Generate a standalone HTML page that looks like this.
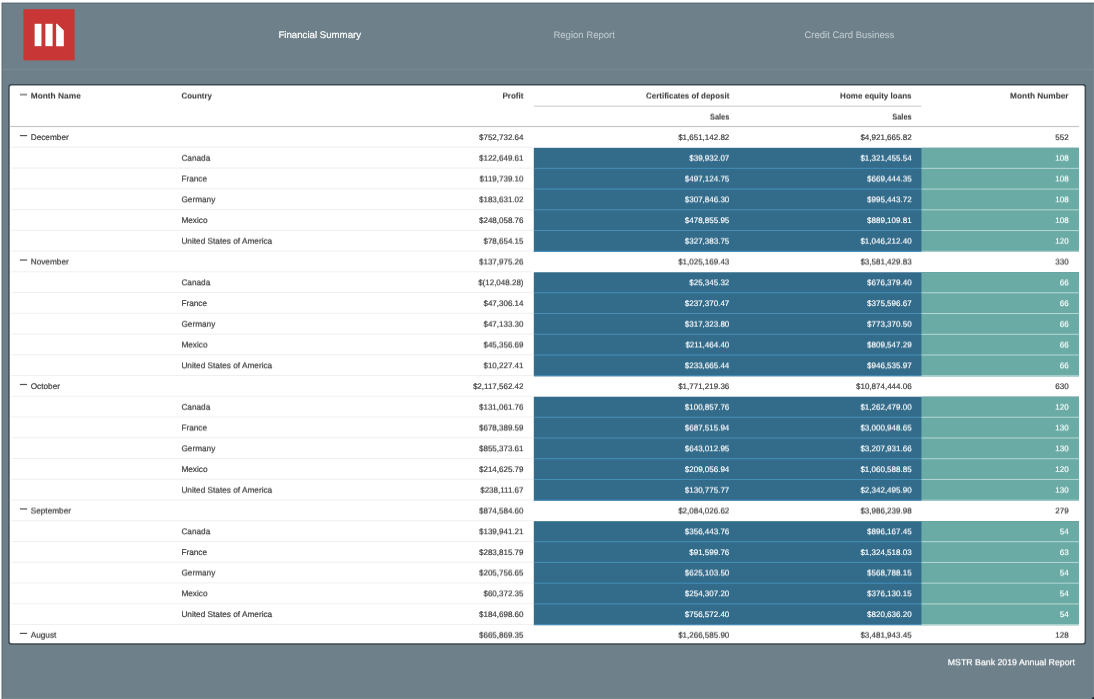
<!DOCTYPE html>
<html lang="en"><head><meta charset="utf-8"><title>MSTR Bank 2019 Annual Report</title>
<style>
html,body{margin:0;padding:0;background:#fff}
body{width:1094px;height:699px;overflow:hidden;position:relative}
svg{position:absolute;left:0;top:0;display:block;will-change:transform}
text{font-family:"Liberation Sans","DejaVu Sans",sans-serif;white-space:pre}
.n{font-size:8.25px;fill:#414141;stroke:#414141;stroke-width:0.2px}
.v{font-size:8.0px;fill:#414141;stroke:#414141;stroke-width:0.2px;text-anchor:end}
.w{fill:#fff;stroke:#fff;stroke-width:0.15px}
.h{font-size:8.15px;font-weight:bold;fill:#383838;stroke:#383838;stroke-width:0.05px}
.e{text-anchor:end}
.tab{font-size:9.55px;fill:#fff;stroke:#fff;stroke-width:0.2px}
.off{fill:#bdc7cc;stroke:#bdc7cc;stroke-width:0.1px}
.foot{font-size:8.76px;fill:#fff;stroke:#fff;stroke-width:0.2px;text-anchor:end}
</style></head>
<body>
<svg width="1094" height="699" viewBox="0 0 1094 699" text-rendering="geometricPrecision">
<defs><filter id="s1" x="-2%" y="-40%" width="104%" height="180%"><feConvolveMatrix order="1 2" kernelMatrix="0.75 0.25" divisor="1" targetX="0" targetY="1" edgeMode="none" preserveAlpha="false"/></filter><filter id="s2" x="-2%" y="-40%" width="104%" height="180%"><feConvolveMatrix order="1 2" kernelMatrix="0.5 0.5" divisor="1" targetX="0" targetY="1" edgeMode="none" preserveAlpha="false"/></filter><filter id="s3" x="-2%" y="-40%" width="104%" height="180%"><feConvolveMatrix order="1 2" kernelMatrix="0.25 0.75" divisor="1" targetX="0" targetY="1" edgeMode="none" preserveAlpha="false"/></filter></defs>
<rect x="0" y="0" width="1094" height="699" fill="#fff"/>
<rect x="1.5" y="2.55" width="1093" height="698" fill="#5d6f79"/>
<rect x="2.7" y="3.85" width="1093" height="698" fill="#6e808a"/>
<rect x="1093" y="3.85" width="1" height="696" fill="#76888f"/>
<rect x="2.7" y="698.2" width="1092" height="0.8" fill="#75878f"/>
<path d="M1094 696.7 Q1092.2 697.2 1091.7 699 L1094 699 Z" fill="#1e2022"/>
<rect x="2.6" y="68.8" width="1092" height="1" fill="#7b8d97"/>
<rect x="23.4" y="9.2" width="51.2" height="51.2" fill="#c93636"/>
<g fill="#fff"><rect x="34.65" y="23.8" width="6.8" height="22.35"/><rect x="45.4" y="23.8" width="7.2" height="22.35"/><path d="M56.15 23.8 L57 23.8 L63.8 30.5 L63.8 46.15 L56.15 46.15 Z"/></g>
<text class="tab" x="278.4" y="38" textLength="82.7" lengthAdjust="spacingAndGlyphs">Financial Summary</text>
<text class="tab off" x="553.4" y="38" textLength="61.5" lengthAdjust="spacingAndGlyphs">Region Report</text>
<text class="tab off" x="804.5" y="38" textLength="89.7" lengthAdjust="spacingAndGlyphs">Credit Card Business</text>
<rect x="8.2" y="84.05" width="1077.9" height="560.8" rx="3" ry="3" fill="#3f4a52"/>
<rect x="9.7" y="85.55" width="1074.9" height="557.8" rx="1.8" ry="1.8" fill="#fff"/>
<g filter="url(#s2)"><rect x="19.9" y="93.5" width="7.2" height="1.2" fill="#555"/><text class="h" x="30.7" y="98" textLength="50.1" lengthAdjust="spacingAndGlyphs">Month Name</text><text class="h" x="181.5" y="98" textLength="30.5" lengthAdjust="spacingAndGlyphs">Country</text><text class="h e" x="523.5" y="98" textLength="21.1" lengthAdjust="spacingAndGlyphs">Profit</text><text class="h e" x="729.3" y="98" textLength="83.2" lengthAdjust="spacingAndGlyphs">Certificates of deposit</text><text class="h e" x="911.6" y="98" textLength="71.5" lengthAdjust="spacingAndGlyphs">Home equity loans</text><text class="h e" x="1068.6" y="98" textLength="58.5" lengthAdjust="spacingAndGlyphs">Month Number</text></g><g filter="url(#s2)"><text class="h e" x="729.3" y="119" textLength="19.2" lengthAdjust="spacingAndGlyphs">Sales</text><text class="h e" x="911.6" y="119" textLength="19.3" lengthAdjust="spacingAndGlyphs">Sales</text></g>
<rect x="533.8" y="105.6" width="387.65" height="1.1" fill="#d0d0d0"/><rect x="9.7" y="125.9" width="1069.3" height="1.2" fill="#c6c6c6"/>
<rect x="533.8" y="147.81" width="545.2" height="103.99" fill="#336b8a"/><rect x="921.45" y="147.81" width="157.55" height="103.99" fill="#6aaba5"/>
<rect x="533.8" y="272.26" width="545.2" height="103.99" fill="#336b8a"/><rect x="921.45" y="272.26" width="157.55" height="103.99" fill="#6aaba5"/>
<rect x="533.8" y="396.71" width="545.2" height="103.99" fill="#336b8a"/><rect x="921.45" y="396.71" width="157.55" height="103.99" fill="#6aaba5"/>
<rect x="533.8" y="521.17" width="545.2" height="103.99" fill="#336b8a"/><rect x="921.45" y="521.17" width="157.55" height="103.99" fill="#6aaba5"/>
<rect x="11" y="146.81" width="521.5" height="1.1" fill="#f0f0f0"/>
<rect x="11" y="167.55" width="521.5" height="1.1" fill="#f0f0f0"/><rect x="533.8" y="167.83" width="387.9" height="1" fill="#4590b9"/><rect x="921.45" y="167.83" width="157.55" height="1" fill="#b6d8d4"/>
<rect x="11" y="188.29" width="521.5" height="1.1" fill="#f0f0f0"/><rect x="533.8" y="188.57" width="387.9" height="1" fill="#4590b9"/><rect x="921.45" y="188.57" width="157.55" height="1" fill="#b6d8d4"/>
<rect x="11" y="209.04" width="521.5" height="1.1" fill="#f0f0f0"/><rect x="533.8" y="209.32" width="387.9" height="1" fill="#4590b9"/><rect x="921.45" y="209.32" width="157.55" height="1" fill="#b6d8d4"/>
<rect x="11" y="229.78" width="521.5" height="1.1" fill="#f0f0f0"/><rect x="533.8" y="230.06" width="387.9" height="1" fill="#4590b9"/><rect x="921.45" y="230.06" width="157.55" height="1" fill="#b6d8d4"/>
<rect x="11" y="250.52" width="521.5" height="1.1" fill="#f0f0f0"/><rect x="533.8" y="250.8" width="387.9" height="1" fill="#4590b9"/><rect x="921.45" y="250.8" width="157.55" height="1" fill="#b6d8d4"/>
<rect x="11" y="271.26" width="521.5" height="1.1" fill="#f0f0f0"/>
<rect x="11" y="292" width="521.5" height="1.1" fill="#f0f0f0"/><rect x="533.8" y="292.28" width="387.9" height="1" fill="#4590b9"/><rect x="921.45" y="292.28" width="157.55" height="1" fill="#b6d8d4"/>
<rect x="11" y="312.75" width="521.5" height="1.1" fill="#f0f0f0"/><rect x="533.8" y="313.03" width="387.9" height="1" fill="#4590b9"/><rect x="921.45" y="313.03" width="157.55" height="1" fill="#b6d8d4"/>
<rect x="11" y="333.49" width="521.5" height="1.1" fill="#f0f0f0"/><rect x="533.8" y="333.77" width="387.9" height="1" fill="#4590b9"/><rect x="921.45" y="333.77" width="157.55" height="1" fill="#b6d8d4"/>
<rect x="11" y="354.23" width="521.5" height="1.1" fill="#f0f0f0"/><rect x="533.8" y="354.51" width="387.9" height="1" fill="#4590b9"/><rect x="921.45" y="354.51" width="157.55" height="1" fill="#b6d8d4"/>
<rect x="11" y="374.97" width="521.5" height="1.1" fill="#f0f0f0"/><rect x="533.8" y="375.25" width="387.9" height="1" fill="#4590b9"/><rect x="921.45" y="375.25" width="157.55" height="1" fill="#b6d8d4"/>
<rect x="11" y="395.71" width="521.5" height="1.1" fill="#f0f0f0"/>
<rect x="11" y="416.46" width="521.5" height="1.1" fill="#f0f0f0"/><rect x="533.8" y="416.74" width="387.9" height="1" fill="#4590b9"/><rect x="921.45" y="416.74" width="157.55" height="1" fill="#b6d8d4"/>
<rect x="11" y="437.2" width="521.5" height="1.1" fill="#f0f0f0"/><rect x="533.8" y="437.48" width="387.9" height="1" fill="#4590b9"/><rect x="921.45" y="437.48" width="157.55" height="1" fill="#b6d8d4"/>
<rect x="11" y="457.94" width="521.5" height="1.1" fill="#f0f0f0"/><rect x="533.8" y="458.22" width="387.9" height="1" fill="#4590b9"/><rect x="921.45" y="458.22" width="157.55" height="1" fill="#b6d8d4"/>
<rect x="11" y="478.68" width="521.5" height="1.1" fill="#f0f0f0"/><rect x="533.8" y="478.96" width="387.9" height="1" fill="#4590b9"/><rect x="921.45" y="478.96" width="157.55" height="1" fill="#b6d8d4"/>
<rect x="11" y="499.42" width="521.5" height="1.1" fill="#f0f0f0"/><rect x="533.8" y="499.7" width="387.9" height="1" fill="#4590b9"/><rect x="921.45" y="499.7" width="157.55" height="1" fill="#b6d8d4"/>
<rect x="11" y="520.17" width="521.5" height="1.1" fill="#f0f0f0"/>
<rect x="11" y="540.91" width="521.5" height="1.1" fill="#f0f0f0"/><rect x="533.8" y="541.19" width="387.9" height="1" fill="#4590b9"/><rect x="921.45" y="541.19" width="157.55" height="1" fill="#b6d8d4"/>
<rect x="11" y="561.65" width="521.5" height="1.1" fill="#f0f0f0"/><rect x="533.8" y="561.93" width="387.9" height="1" fill="#4590b9"/><rect x="921.45" y="561.93" width="157.55" height="1" fill="#b6d8d4"/>
<rect x="11" y="582.39" width="521.5" height="1.1" fill="#f0f0f0"/><rect x="533.8" y="582.67" width="387.9" height="1" fill="#4590b9"/><rect x="921.45" y="582.67" width="157.55" height="1" fill="#b6d8d4"/>
<rect x="11" y="603.13" width="521.5" height="1.1" fill="#f0f0f0"/><rect x="533.8" y="603.41" width="387.9" height="1" fill="#4590b9"/><rect x="921.45" y="603.41" width="157.55" height="1" fill="#b6d8d4"/>
<rect x="11" y="623.88" width="521.5" height="1.1" fill="#f0f0f0"/><rect x="533.8" y="624.16" width="387.9" height="1" fill="#4590b9"/><rect x="921.45" y="624.16" width="157.55" height="1" fill="#b6d8d4"/>
<rect x="19.9" y="134.99" width="7.2" height="1.2" fill="#555"/><g><text class="n" x="30.7" y="140">December</text><text class="v" x="523.5" y="140">$752,732.64</text><text class="v" x="729.3" y="140">$1,651,142.82</text><text class="v" x="911.6" y="140">$4,921,665.82</text><text class="v" x="1068.6" y="140">552</text></g>
<g filter="url(#s3)"><text class="n" x="181.4" y="160">Canada</text><text class="v" x="523.5" y="160">$122,649.61</text><text class="v w" x="729.3" y="160">$39,932.07</text><text class="v w" x="911.6" y="160">$1,321,455.54</text><text class="v w" x="1068.6" y="160">108</text></g>
<g filter="url(#s2)"><text class="n" x="181.4" y="181">France</text><text class="v" x="523.5" y="181">$119,739.10</text><text class="v w" x="729.3" y="181">$497,124.75</text><text class="v w" x="911.6" y="181">$669,444.35</text><text class="v w" x="1068.6" y="181">108</text></g>
<g filter="url(#s1)"><text class="n" x="181.4" y="202">Germany</text><text class="v" x="523.5" y="202">$183,631.02</text><text class="v w" x="729.3" y="202">$307,846.30</text><text class="v w" x="911.6" y="202">$995,443.72</text><text class="v w" x="1068.6" y="202">108</text></g>
<g><text class="n" x="181.4" y="223">Mexico</text><text class="v" x="523.5" y="223">$248,058.76</text><text class="v w" x="729.3" y="223">$478,855.95</text><text class="v w" x="911.6" y="223">$889,109.81</text><text class="v w" x="1068.6" y="223">108</text></g>
<g filter="url(#s3)"><text class="n" x="181.4" y="243">United States of America</text><text class="v" x="523.5" y="243">$78,654.15</text><text class="v w" x="729.3" y="243">$327,383.75</text><text class="v w" x="911.6" y="243">$1,046,212.40</text><text class="v w" x="1068.6" y="243">120</text></g>
<rect x="19.9" y="259.44" width="7.2" height="1.2" fill="#555"/><g filter="url(#s2)"><text class="n" x="30.7" y="264">November</text><text class="v" x="523.5" y="264">$137,975.26</text><text class="v" x="729.3" y="264">$1,025,169.43</text><text class="v" x="911.6" y="264">$3,581,429.83</text><text class="v" x="1068.6" y="264">330</text></g>
<g filter="url(#s1)"><text class="n" x="181.4" y="285">Canada</text><text class="v" x="523.5" y="285">$(12,048.28)</text><text class="v w" x="729.3" y="285">$25,345.32</text><text class="v w" x="911.6" y="285">$676,379.40</text><text class="v w" x="1068.6" y="285">66</text></g>
<g><text class="n" x="181.4" y="306">France</text><text class="v" x="523.5" y="306">$47,306.14</text><text class="v w" x="729.3" y="306">$237,370.47</text><text class="v w" x="911.6" y="306">$375,596.67</text><text class="v w" x="1068.6" y="306">66</text></g>
<g filter="url(#s3)"><text class="n" x="181.4" y="326">Germany</text><text class="v" x="523.5" y="326">$47,133.30</text><text class="v w" x="729.3" y="326">$317,323.80</text><text class="v w" x="911.6" y="326">$773,370.50</text><text class="v w" x="1068.6" y="326">66</text></g>
<g filter="url(#s2)"><text class="n" x="181.4" y="347">Mexico</text><text class="v" x="523.5" y="347">$45,356.69</text><text class="v w" x="729.3" y="347">$211,464.40</text><text class="v w" x="911.6" y="347">$809,547.29</text><text class="v w" x="1068.6" y="347">66</text></g>
<g filter="url(#s1)"><text class="n" x="181.4" y="368">United States of America</text><text class="v" x="523.5" y="368">$10,227.41</text><text class="v w" x="729.3" y="368">$233,665.44</text><text class="v w" x="911.6" y="368">$946,535.97</text><text class="v w" x="1068.6" y="368">66</text></g>
<rect x="19.9" y="383.89" width="7.2" height="1.2" fill="#555"/><g><text class="n" x="30.7" y="389">October</text><text class="v" x="523.5" y="389">$2,117,562.42</text><text class="v" x="729.3" y="389">$1,771,219.36</text><text class="v" x="911.6" y="389">$10,874,444.06</text><text class="v" x="1068.6" y="389">630</text></g>
<g filter="url(#s3)"><text class="n" x="181.4" y="409">Canada</text><text class="v" x="523.5" y="409">$131,061.76</text><text class="v w" x="729.3" y="409">$100,857.76</text><text class="v w" x="911.6" y="409">$1,262,479.00</text><text class="v w" x="1068.6" y="409">120</text></g>
<g filter="url(#s2)"><text class="n" x="181.4" y="430">France</text><text class="v" x="523.5" y="430">$678,389.59</text><text class="v w" x="729.3" y="430">$687,515.94</text><text class="v w" x="911.6" y="430">$3,000,948.65</text><text class="v w" x="1068.6" y="430">130</text></g>
<g filter="url(#s1)"><text class="n" x="181.4" y="451">Germany</text><text class="v" x="523.5" y="451">$855,373.61</text><text class="v w" x="729.3" y="451">$643,012.95</text><text class="v w" x="911.6" y="451">$3,207,931.66</text><text class="v w" x="1068.6" y="451">130</text></g>
<g><text class="n" x="181.4" y="472">Mexico</text><text class="v" x="523.5" y="472">$214,625.79</text><text class="v w" x="729.3" y="472">$209,056.94</text><text class="v w" x="911.6" y="472">$1,060,588.85</text><text class="v w" x="1068.6" y="472">120</text></g>
<g filter="url(#s3)"><text class="n" x="181.4" y="492">United States of America</text><text class="v" x="523.5" y="492">$238,111.67</text><text class="v w" x="729.3" y="492">$130,775.77</text><text class="v w" x="911.6" y="492">$2,342,495.90</text><text class="v w" x="1068.6" y="492">130</text></g>
<rect x="19.9" y="508.35" width="7.2" height="1.2" fill="#555"/><g filter="url(#s2)"><text class="n" x="30.7" y="513">September</text><text class="v" x="523.5" y="513">$874,584.60</text><text class="v" x="729.3" y="513">$2,084,026.62</text><text class="v" x="911.6" y="513">$3,986,239.98</text><text class="v" x="1068.6" y="513">279</text></g>
<g filter="url(#s1)"><text class="n" x="181.4" y="534">Canada</text><text class="v" x="523.5" y="534">$139,941.21</text><text class="v w" x="729.3" y="534">$356,443.76</text><text class="v w" x="911.6" y="534">$896,167.45</text><text class="v w" x="1068.6" y="534">54</text></g>
<g><text class="n" x="181.4" y="555">France</text><text class="v" x="523.5" y="555">$283,815.79</text><text class="v w" x="729.3" y="555">$91,599.76</text><text class="v w" x="911.6" y="555">$1,324,518.03</text><text class="v w" x="1068.6" y="555">63</text></g>
<g filter="url(#s2)"><text class="n" x="181.4" y="575">Germany</text><text class="v" x="523.5" y="575">$205,756.65</text><text class="v w" x="729.3" y="575">$625,103.50</text><text class="v w" x="911.6" y="575">$568,788.15</text><text class="v w" x="1068.6" y="575">54</text></g>
<g filter="url(#s1)"><text class="n" x="181.4" y="596">Mexico</text><text class="v" x="523.5" y="596">$60,372.35</text><text class="v w" x="729.3" y="596">$254,307.20</text><text class="v w" x="911.6" y="596">$376,130.15</text><text class="v w" x="1068.6" y="596">54</text></g>
<g><text class="n" x="181.4" y="617">United States of America</text><text class="v" x="523.5" y="617">$184,698.60</text><text class="v w" x="729.3" y="617">$756,572.40</text><text class="v w" x="911.6" y="617">$820,636.20</text><text class="v w" x="1068.6" y="617">54</text></g>
<rect x="19.9" y="632.8" width="7.2" height="1.2" fill="#555"/><g filter="url(#s3)"><text class="n" x="30.7" y="637">August</text><text class="v" x="523.5" y="637">$665,869.35</text><text class="v" x="729.3" y="637">$1,266,585.90</text><text class="v" x="911.6" y="637">$3,481,943.45</text><text class="v" x="1068.6" y="637">128</text></g>
<g filter="url(#s1)"><text class="foot" x="1074.9" y="665" textLength="127.1" lengthAdjust="spacingAndGlyphs">MSTR Bank 2019 Annual Report</text></g>
</svg>
</body></html>
